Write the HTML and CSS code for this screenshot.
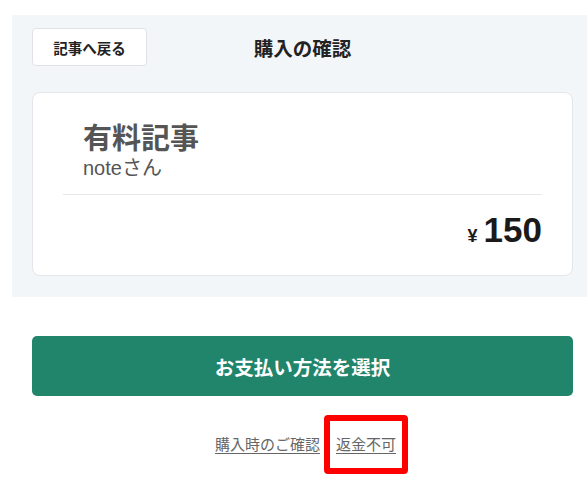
FILE: index.html
```html
<!DOCTYPE html>
<html lang="ja">
<head>
  <meta charset="UTF-8">
  <title>購入の確認</title>
  <meta name="viewport" content="width=device-width, initial-scale=1.0">
  <link rel="stylesheet" href="styles.css">
</head>
<body>
  <div id="page">
    <div id="panel">
      <div class="header">
        <button class="back-btn">記事へ戻る</button>
        <h1 class="title">購入の確認</h1>
        <span></span>
      </div>
      <div class="card">
        <div class="item">
          <div class="item-title">有料記事</div>
          <div class="item-author">noteさん</div>
        </div>
        <div class="price"><span class="yen">¥</span>150</div>
      </div>
    </div>
    <div class="actions">
      <button class="pay-btn">お支払い方法を選択</button>
      <div class="links">
        <a href="#" class="note-link">購入時のご確認</a>
        <span class="marked">
          <a href="#" class="note-link">返金不可</a>
          <span class="mark"></span>
        </span>
      </div>
    </div>
  </div>
</body>
</html>
```

FILE: styles.css
```css
body { margin: 0; background: #fff; font-family: "Liberation Sans", "Noto Sans CJK JP", sans-serif; }
#page {
  min-height: 100vh;
  box-sizing: border-box;
  padding: 15px 0 0 12px;
}
#panel {
  background: #f3f6f9;
  padding: 13px 14px 21px 20px;
}
.header {
  display: grid;
  grid-template-columns: 1fr auto 1fr;
  align-items: center;
  height: 38px;
}
.back-btn {
  justify-self: start;
  width: 115px;
  height: 38px;
  background: #fff;
  border: 1px solid #dfe3e8;
  border-radius: 4px;
  font-family: "Noto Sans CJK JP", sans-serif;
  font-size: 14.5px;
  font-weight: 700;
  color: #222;
  padding: 0;
}
.title {
  margin: 0;
  font-family: "Noto Sans CJK JP", sans-serif;
  font-size: 19.5px;
  font-weight: 700;
  color: #222;
}
.card {
  margin-top: 26px;
  background: #fff;
  border: 1px solid #e3e7eb;
  border-radius: 8px;
  padding: 25px 30px 19px;
}
.item {
  padding: 0 20px 12px;
  border-bottom: 1px solid #e6e8eb;
}
.item-title {
  font-family: "Noto Sans CJK JP", sans-serif;
  font-size: 29px;
  line-height: 36px;
  font-weight: 700;
  color: #555;
}
.item-author {
  font-size: 20px;
  line-height: 28px;
  color: #555;
}
.price {
  padding-top: 15px;
  text-align: right;
  font-size: 35px;
  line-height: 40px;
  font-weight: 700;
  color: #1a1a1a;
}
.yen {
  font-size: 18px;
  margin-right: 6px;
}
.actions {
  margin: 39px 14px 0 20px;
  padding-bottom: 40px;
}
.pay-btn {
  display: block;
  width: 100%;
  height: 60px;
  background: #21856b;
  border: none;
  border-radius: 5px;
  color: #fff;
  font-family: "Noto Sans CJK JP", sans-serif;
  font-size: 19.5px;
  font-weight: 700;
}
.links {
  margin-top: 37px;
  padding-left: 6px;
  display: flex;
  justify-content: center;
  gap: 16px;
  line-height: 22px;
}
.note-link {
  font-family: "Noto Sans CJK JP", sans-serif;
  font-size: 15px;
  color: #666;
  text-decoration: underline;
  text-underline-offset: 3px;
}
.marked {
  position: relative;
  display: inline-block;
}
.mark {
  position: absolute;
  top: -18px;
  bottom: -18px;
  left: -12px;
  right: -12px;
  border: 6px solid #f00;
  border-radius: 4px;
}
```
